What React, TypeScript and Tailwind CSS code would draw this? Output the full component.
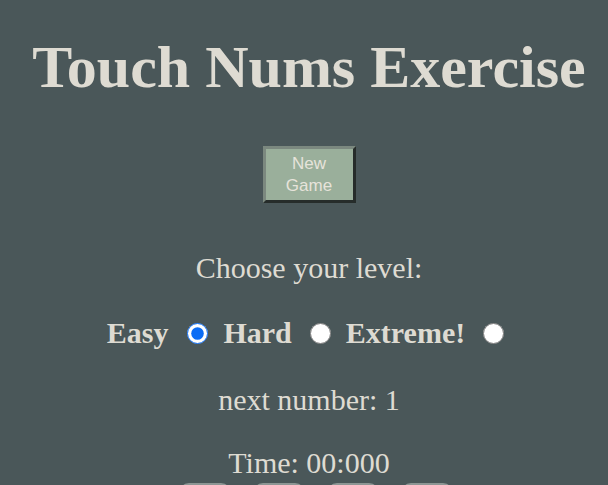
import React from 'react';

export default function App() {
  return (
    <div className="min-h-[485px] bg-[#4a5759] text-[#dedbd2] flex flex-col items-center text-center pl-[10px] font-['Liberation_Serif',serif]">
      <h1 className="mt-[25px] text-[60px] font-bold leading-[84px]">Touch Nums Exercise</h1>

      <button className="mt-[37px] w-[93px] h-[57px] bg-[#9aaf9b] text-[#e6e3da] text-[17px] leading-[22px] font-['Liberation_Sans',sans-serif] border-[3px] border-t-[#7b887f] border-l-[#7b887f] border-b-[#262c2a] border-r-[#262c2a] px-4">
        New Game
      </button>

      <p className="mt-[50px] text-[30px] leading-[30px]">Choose your level:</p>

      <div className="mt-[35px] mr-[7px] flex items-center text-[30px] leading-[30px] font-bold">
        <label className="flex items-center">
          Easy
          <input type="radio" name="level" defaultChecked className="ml-[19px] mr-[15px] w-[21px] h-[21px] accent-[#0b6cf5]" />
        </label>
        <label className="flex items-center">
          Hard
          <input type="radio" name="level" className="ml-[18px] mr-[15px] w-[21px] h-[21px]" />
        </label>
        <label className="flex items-center">
          Extreme!
          <input type="radio" name="level" className="ml-[18px] w-[21px] h-[21px]" />
        </label>
      </div>

      <p className="mt-[37px] text-[30px] leading-[30px]">next number: 1</p>

      <p className="mt-[33px] text-[30px] leading-[30px]">Time: 00:000</p>

      <div className="mt-[5px] ml-[14px] flex gap-[22px]">
        {[0, 1, 2, 3].map((i) => (
          <div key={i} className="w-[52px] h-[52px] rounded-[10px] border-2 border-[#8d9694]" />
        ))}
      </div>
    </div>
  );
}
